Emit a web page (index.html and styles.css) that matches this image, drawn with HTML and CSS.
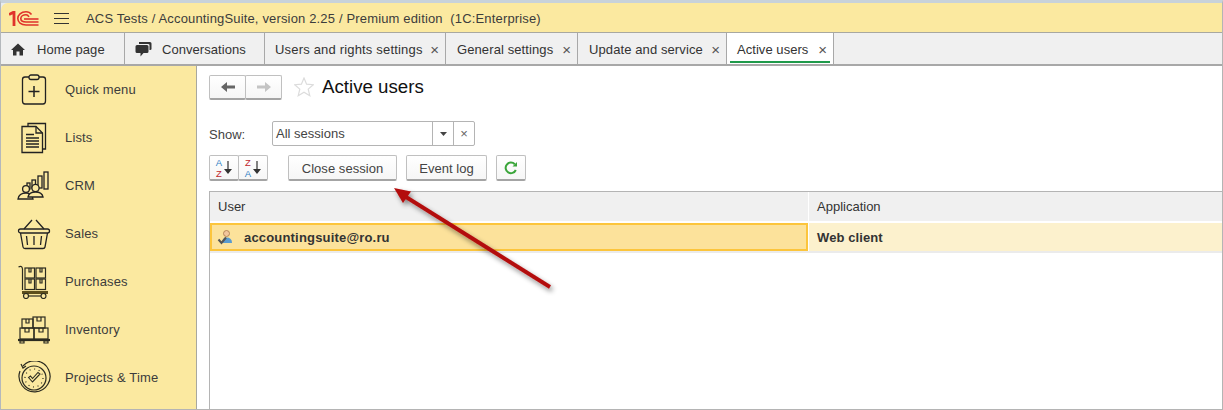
FILE: index.html
```html
<!DOCTYPE html>
<html lang="en">
<head>
<meta charset="utf-8">
<title>Active users</title>
<link rel="stylesheet" href="styles.css">
</head>
<body>
<div class="window">
  <header class="titlebar">
    <svg class="logo" width="30" height="15" viewBox="0 0 30 15" fill="none" stroke="#e0322b" stroke-width="1.6">
      <path d="M0 3.500 L5 1 V15" stroke-width="2.800"/>
      <path d="M22.500 3.500 C21 1.500 19 .8 17 .8 C12 .8 8.800 4 8.800 7.500 C8.800 11 12 14 17 14 H29.500"/>
      <path d="M20 5.800 C19.200 4.500 18.200 3.800 17 3.800 C14 3.800 11.800 5.500 11.800 7.500 C11.800 9.500 14 11 17 11 H29.500"/>
      <path d="M15 8 H29.500"/>
    </svg>
    <svg class="burger" width="15" height="12" viewBox="0 0 15 12" stroke="#333" stroke-width="1"><path d="M0 1.500H15M0 6.500H15M0 11.500H15"/></svg>
    <span class="apptitle">ACS Tests / AccountingSuite, version 2.25 / Premium edition&nbsp; (1C:Enterprise)</span>
  </header>
  <nav class="tabs">
    <div class="tab tab-home">
      <svg width="14" height="13" viewBox="0 0 14 13" fill="#333"><path d="M7 .5 L14 7 H12 V12.5 H8.500 V8.500 H5.500 V12.5 H2 V7 H0 Z"/></svg>
      <span>Home page</span>
    </div>
    <div class="tab tab-conv">
      <svg width="17" height="15" viewBox="0 0 17 15" fill="#333"><path d="M4 0 H15 Q16.500 0 16.500 1.500 V7 Q16.500 8 15 8 H14.500 V3 Q14.500 2 13 2 H4 Z"/><path d="M2 3 H12 Q13.500 3 13.500 4.500 V9.500 Q13.500 11 12 11 H8.500 L5.500 14.500 V11 H2 Q.5 11 .5 9.500 V4.500 Q.5 3 2 3 Z"/></svg>
      <span>Conversations</span>
    </div>
    <div class="tab tab-users"><span>Users and rights settings</span><i class="x">×</i></div>
    <div class="tab tab-gen"><span>General settings</span><i class="x">×</i></div>
    <div class="tab tab-upd"><span>Update and service</span><i class="x">×</i></div>
    <div class="tab tab-active"><span>Active users</span><i class="x">×</i></div>
  </nav>
  <div class="body">
    <aside class="sidebar">
      <div class="menu-item">
        <svg width="30" height="32" viewBox="0 0 30 32" fill="none" stroke="#222" stroke-width="1.300"><path d="M10 3 H6 Q3.500 3 3.500 5.500 V27 Q3.500 30 6 30 H24 Q26.500 30 26.500 27 V5.500 Q26.500 3 24 3 H20"/><rect x="10" y="1" width="10" height="4.500" rx="2"/><path d="M15 12 V23 M9.500 17.500 H20.500" stroke-width="1.500"/></svg>
        <span>Quick menu</span>
      </div>
      <div class="menu-item">
        <svg width="30" height="32" viewBox="0 0 30 32" fill="none" stroke="#222" stroke-width="1.300"><path d="M9 4 V1.500 H26.500 V27 H23.500"/><path d="M3 4.500 H17 L23.500 11 V30.500 H3 Z"/><path d="M17 4.500 V11 H23.500"/><path d="M7 12.500 H15 M7 16 H20 M7 19 H20 M7 22 H20 M7 25 H20" stroke-width="1.500"/></svg>
        <span>Lists</span>
      </div>
      <div class="menu-item">
        <svg width="34" height="30" viewBox="0 0 34 30" fill="none" stroke="#222" stroke-width="1.300"><rect x="27" y="1" width="4" height="17"/><rect x="21" y="5" width="4" height="12"/><rect x="15" y="9" width="3.500" height="8"/><rect x="10" y="12" width="3" height="6"/><circle cx="9" cy="18" r="3.400" fill="#fbe9a0"/><circle cx="18.500" cy="17" r="3.600" fill="#fbe9a0"/><path d="M1 28 Q2 22 9 22 Q15 22 16 28 Z" fill="#fbe9a0"/><path d="M11 26 Q12 21 18.500 21 Q25 21 26 26 Z" fill="#fbe9a0"/></svg>
        <span>CRM</span>
      </div>
      <div class="menu-item">
        <svg width="34" height="32" viewBox="0 0 34 32" fill="none" stroke="#222" stroke-width="1.300"><path d="M7 11 L15 2 M19 2 L27 11"/><rect x="1.500" y="11" width="31" height="4" rx="2"/><path d="M3.500 15 L6 29 Q6.300 30.500 8 30.500 H26 Q27.700 30.500 28 29 L30.500 15"/><path d="M9.500 18 L10.500 27 M17 18 V27 M24.500 18 L23.500 27"/></svg>
        <span>Sales</span>
      </div>
      <div class="menu-item">
        <svg width="34" height="34" viewBox="0 0 34 34" fill="none" stroke="#2b2b20" stroke-width="1.200"><path d="M1.500 2 Q5 0 5.500 4 V25"/><rect x="8" y="3" width="9.500" height="10"/><rect x="19" y="3" width="9.500" height="10"/><rect x="8" y="14" width="9.500" height="10.500"/><rect x="19" y="14" width="9.500" height="10.500"/><path d="M12 3 V7 H14 V3 M23 3 V7 H25 V3 M12 14 V18 H14 V14 M23 14 V18 H25 V14"/><path d="M5 27.500 H31" stroke="#5c4f1c" stroke-width="3"/><circle cx="9" cy="31" r="2.500"/><circle cx="26.500" cy="31" r="2.500"/><path d="M11.500 31 H24"/></svg>
        <span>Purchases</span>
      </div>
      <div class="menu-item">
        <svg width="34" height="28" viewBox="0 0 34 28" fill="none" stroke="#2b2b20" stroke-width="1.200"><rect x="5" y="3" width="11" height="9"/><rect x="16" y="1" width="12" height="11"/><rect x="3" y="12" width="14" height="11"/><rect x="17" y="12" width="14" height="11"/><path d="M9 3 V7 H12 V3 M20 1 V5 H24 V1 M8 12 V16 H12 V12 M22 12 V16 H26 V12"/><path d="M1 24 H33" stroke-width="2.200"/><path d="M3 25 H7 V27 H3 Z M27 25 H31 V27 H27 Z"/></svg>
        <span>Inventory</span>
      </div>
      <div class="menu-item">
        <svg width="34" height="34" viewBox="0 0 34 34" fill="none" stroke="#2b2b20" stroke-width="1.200"><path d="M6 5 A15.500 15.500 0 1 1 3 10"/><path d="M4 3 L6 7 L9 5" /><circle cx="17" cy="17" r="12"/><circle cx="17" cy="17" r="9" stroke-dasharray="1 3.700"/><path d="M11.500 16.500 L15.500 21 L23 13 L21 11.500 L15.500 17.500 L13.500 15 Z" stroke-width="1.100"/></svg>
        <span>Projects &amp; Time</span>
      </div>
    </aside>
    <main class="content">
      <div class="form-head">
        <div class="navgroup">
          <button class="btn nav-btn"><svg width="14" height="10" viewBox="0 0 14 10" fill="#666"><path d="M0 5 L6 0 V3.500 H14 V6.500 H6 V10 Z"/></svg></button>
          <button class="btn nav-btn"><svg width="14" height="10" viewBox="0 0 14 10" fill="#c4c4c4"><path d="M14 5 L8 0 V3.500 H0 V6.500 H8 V10 Z"/></svg></button>
        </div>
        <svg class="star" width="20" height="20" viewBox="0 0 20 20" fill="#fff" stroke="#dcdcdc" stroke-width="1.200"><path d="M10 1 L12.600 7.200 L19.300 7.700 L14.200 12.100 L15.800 18.700 L10 15.200 L4.200 18.700 L5.800 12.100 L.7 7.700 L7.400 7.200 Z"/></svg>
        <h1>Active users</h1>
      </div>
      <div class="show-row">
        <label>Show:</label>
        <div class="select">
          <span class="select-value">All sessions</span>
          <span class="select-btn"><svg width="7" height="4" viewBox="0 0 7 4" fill="#444"><path d="M0 0H7L3.500 4Z"/></svg></span>
          <span class="select-btn select-clear">×</span>
        </div>
      </div>
      <div class="toolbar">
        <div class="sortgroup">
          <button class="btn sort-btn">
            <span class="az"><b class="blue">A</b><b class="red">Z</b></span><svg width="8" height="13" viewBox="0 0 8 13" fill="#333" stroke="none"><path d="M3.400 0 H4.600 V8 H8 L4 13 L0 8 H3.400 Z"/></svg>
          </button>
          <button class="btn sort-btn">
            <span class="az"><b class="red">Z</b><b class="blue">A</b></span><svg width="8" height="13" viewBox="0 0 8 13" fill="#333" stroke="none"><path d="M3.400 0 H4.600 V8 H8 L4 13 L0 8 H3.400 Z"/></svg>
          </button>
        </div>
        <button class="btn cmd close-session">Close session</button>
        <button class="btn cmd event-log">Event log</button>
        <button class="btn refresh"><svg width="14" height="14" viewBox="0 0 14 14" fill="none" stroke="#3aa53a" stroke-width="2"><path d="M11.800 9 A5.300 5.300 0 1 1 10.800 3.200"/><path d="M8.500 5.500 H13 V1 Z" fill="#3aa53a" stroke="none"/></svg></button>
      </div>
      <div class="grid">
        <div class="grid-head">
          <div class="col col-user">User</div>
          <div class="col col-app">Application</div>
        </div>
        <div class="grid-row">
          <div class="cell cell-user">
            <svg width="16" height="16" viewBox="0 0 16 16"><circle cx="9.500" cy="4.500" r="3" fill="#f3c79c" stroke="#a9764a" stroke-width=".8"/><path d="M5 14 Q5 8.500 9.500 8.500 Q15 8.500 15 14 Z" fill="#5a9bd0"/><path d="M1.500 10.500 L4.500 14 L9 8.500" fill="none" stroke="#555" stroke-width="2"/></svg>
            <span>accountingsuite@ro.ru</span>
          </div>
          <div class="cell cell-app">Web client</div>
        </div>
      </div>
    </main>
  </div>
  <svg class="arrow" width="180" height="120" viewBox="0 0 180 120">
    <defs><filter id="sh" x="-20%" y="-20%" width="140%" height="140%"><feDropShadow dx="2" dy="3" stdDeviation="2.500" flood-color="#000" flood-opacity=".45"/></filter></defs>
    <g filter="url(#sh)" fill="#b30d0d" stroke="none">
      <path d="M22 12.200 L166 102.200 L164 105.800 L20 15.800 Z"/>
      <path d="M9 5 L26 8.500 L18 20 Z"/>
    </g>
  </svg>
</div>
</body>
</html>
```
FILE: styles.css
```css
* { box-sizing: border-box; }
html, body { margin: 0; height: 100%; overflow: hidden; }
body { background: #fff; font-family: "Liberation Sans", Arial, sans-serif; font-size: 13px; color: #333; }
.window { position: relative; width: 1223px; height: 410px; background: #e6ebef; border-top: 3px solid #c8d2da; border-left: 1px solid #b4b8bc; border-right: 1px solid #b4b4b4; border-bottom: 1px solid #b4b4b4; display: flex; flex-direction: column; overflow: hidden; }
.titlebar { height: 30px; flex: none; background: #fbe9a0; border-radius: 7px 0 0 0; display: flex; align-items: center; padding: 1px 0 0 8px; border-bottom: 1px solid #a8a8a0; }
.logo { margin-right: 15px; }
.burger { margin-right: 17px; }
.apptitle { font-size: 13px; color: #3c3c3c; letter-spacing: .16px; white-space: pre; }
.tabs { height: 33px; flex: none; display: flex; background: #f0f0f0; border-bottom: 2px solid #a8a8a8; }
.tab { display: flex; align-items: center; height: 100%; padding-top: 1px; border-right: 1px solid #a8a8a8; white-space: nowrap; position: relative; letter-spacing: .05px; }
.tab-home { width: 124px; padding-left: 10px; gap: 12px; }
.tab-conv { width: 140px; padding-left: 10px; gap: 10px; }
.tab-users { width: 181px; padding-left: 10px; letter-spacing: .18px; }
.tab-gen { width: 132px; padding-left: 11px; letter-spacing: .1px; }
.tab-upd { width: 149px; padding-left: 11px; letter-spacing: .1px; }
.tab-active { width: 107px; padding-left: 10px; background: #fff; }
.tab-active::after { content: ""; position: absolute; left: 3px; right: 3px; bottom: 1px; height: 2px; background: #1f9a4b; }
.x { font-style: normal; position: absolute; right: 6px; top: 9px; font-size: 15px; line-height: 15px; color: #555; letter-spacing: 0; }
.body { flex: 1; display: flex; min-height: 0; }
.sidebar { width: 196px; flex: none; background: #fbe9a0; border-right: 1px solid #a8a8a0; display: flex; flex-direction: column; }
.menu-item { height: 48px; flex: none; position: relative; display: flex; align-items: center; padding: 0 0 2px 64px; letter-spacing: .15px; color: #3c3c3c; }
.menu-item svg { position: absolute; left: 33px; top: 50%; transform: translate(-50%, -50%); }
.content { flex: 1; min-width: 0; padding: 8px 0 0 12px; background: #fff; }
.form-head { display: flex; align-items: center; height: 26px; }
.navgroup { display: flex; }
.btn { font-family: inherit; font-size: 13px; color: #444; background: linear-gradient(#fff, #f6f6f6); border: 1px solid #c0c0c0; border-bottom: 2px solid #a4a4a4; border-radius: 2px; display: flex; align-items: center; justify-content: center; padding: 0; letter-spacing: .05px; }
.nav-btn { width: 37px; height: 25px; }
.nav-btn + .nav-btn { margin-left: -1px; }
.star { margin-left: 12px; }
h1 { font-size: 18.700px; font-weight: normal; color: #111; margin: 0 0 0 8px; }
.show-row { display: flex; align-items: center; margin-top: 21px; height: 25px; }
.show-row label { width: 63px; padding-top: 1px; color: #444; }
.select { width: 203px; height: 25px; border: 1px solid #b4b4b4; border-radius: 2px; display: flex; }
.select-value { flex: 1; padding-left: 3px; line-height: 24px; color: #444; }
.select-btn { width: 21px; border-left: 1px solid #b4b4b4; display: flex; align-items: center; justify-content: center; color: #666; }
.toolbar { display: flex; margin-top: 9px; height: 26px; }
.sortgroup { display: flex; }
.sort-btn { width: 30px; height: 26px; gap: 2px; }
.sort-btn + .sort-btn { margin-left: -1px; }
.az { display: flex; flex-direction: column; font-size: 9.500px; line-height: 11px; }
.az b { font-weight: normal; }
.blue { color: #2f7ec4; }
.red { color: #c0272d; }
.cmd { height: 26px; padding-top: 1px; }
.close-session { width: 109px; margin-left: 20px; }
.event-log { width: 81px; margin-left: 9px; }
.refresh { width: 30px; height: 26px; margin-left: 9px; }
.grid { margin-top: 10px; border: 1px solid #b4b4b4; border-right: 0; height: 300px; }
.grid-head { display: flex; height: 31px; background: #f0f0f0; border-bottom: 2px solid #fff; }
.col { display: flex; align-items: center; padding-left: 8px; }
.col-user { width: 599px; border-right: 1px solid #fff; }
.col-app { flex: 1; }
.grid-row { display: flex; height: 30px; border-bottom: 2px solid #ebebeb; font-weight: bold; }
.cell { display: flex; align-items: center; }
.cell-user { width: 598px; background: #fce29b; border: 2px solid #fcc53c; padding-left: 5px; gap: 11px; letter-spacing: .18px; }
.cell-app { flex: 1; background: #fcf1cd; padding-left: 8px; border-left: 1px solid #fff; letter-spacing: .1px; }
.arrow { position: absolute; left: 384px; top: 180px; pointer-events: none; }
```
